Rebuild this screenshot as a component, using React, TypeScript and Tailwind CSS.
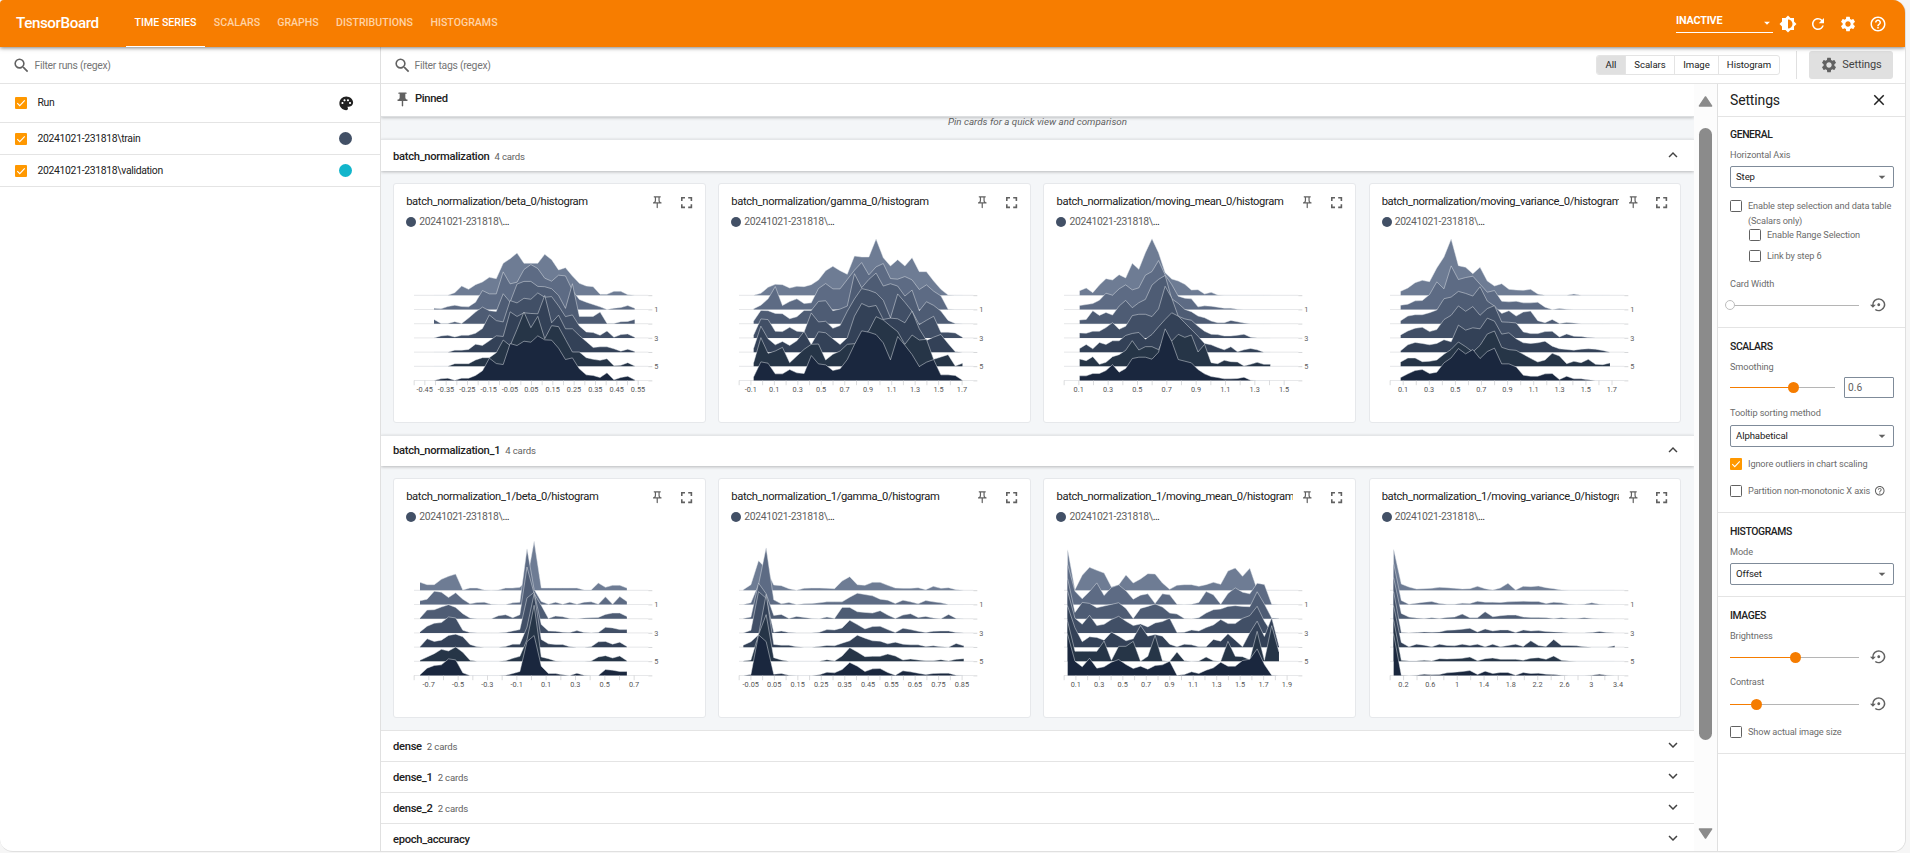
import type { ReactNode } from "react";
import {
  MdArrowDropDown,
  MdBrightness6,
  MdClose,
  MdExpandLess,
  MdExpandMore,
  MdFullscreen,
  MdHelpOutline,
  MdOutlinePushPin,
  MdPalette,
  MdPushPin,
  MdRefresh,
  MdSearch,
  MdSettings,
  MdSettingsBackupRestore,
} from "react-icons/md";

type Histogram = {
  tag: string;
  x0: number;
  dx: number;
  tick: number;
  labels: string[];
  steps: number[][];
};

const STEP_COLORS = ["#6e7c94", "#5d6b84", "#4e5c74", "#414f66", "#334157", "#263547", "#1a273e"];
const ROW = 42.6;

const GROUP_A: Histogram[] = [
  {
    tag: "batch_normalization/beta_0/histogram",
    x0: 123,
    dx: 20.76,
    tick: 32,
    labels: ["-0.45", "-0.35", "-0.25", "-0.15", "-0.05", "0.05", "0.15", "0.25", "0.35", "0.45", "0.55"],
    steps: [
      [0, 0, 0, 8, 28, 18, 32, 40, 54, 50, 96, 110, 127, 96, 96, 96, 123, 107, 76, 83, 58, 36, 28, 26, 3, 3, 12, 12, 2, 0],
      [4, 2, 9, 13, 9, 8, 22, 57, 47, 47, 113, 77, 82, 120, 135, 123, 94, 85, 103, 101, 58, 30, 22, 15, 8, 0, 4, 6, 12, 4],
      [13, 1, 1, 6, 1, 17, 35, 50, 39, 37, 90, 65, 119, 127, 127, 112, 111, 105, 85, 46, 120, 22, 22, 22, 35, 1, 1, 6, 7, 13],
      [0, 6, 8, 3, 8, 8, 14, 28, 69, 52, 48, 112, 105, 119, 116, 135, 122, 124, 96, 64, 69, 36, 18, 16, 8, 21, 2, 10, 12, 2],
      [0, 0, 0, 6, 6, 8, 24, 20, 34, 49, 47, 121, 107, 118, 116, 115, 170, 88, 111, 70, 70, 50, 32, 14, 16, 16, 10, 3, 9, 2],
      [0, 0, 0, 8, 8, 8, 19, 26, 26, 41, 79, 62, 111, 163, 116, 150, 83, 122, 119, 81, 43, 43, 26, 21, 18, 23, 2, 3, 11, 1],
      [0, 5, 7, 1, 7, 7, 15, 29, 67, 51, 48, 111, 105, 118, 115, 134, 122, 121, 97, 63, 68, 35, 17, 15, 9, 23, 2, 9, 13, 2],
    ],
  },
  {
    tag: "batch_normalization/gamma_0/histogram",
    x0: 107,
    dx: 21.6,
    tick: 35.2,
    labels: ["-0.1", "0.1", "0.3", "0.5", "0.7", "0.9", "1.1", "1.3", "1.5", "1.7"],
    steps: [
      [0, 6, 24, 33, 32, 22, 27, 26, 32, 46, 74, 87, 74, 63, 118, 115, 115, 169, 113, 88, 107, 88, 113, 71, 71, 43, 18, 1, 0, 0],
      [2, 13, 32, 69, 12, 24, 32, 18, 20, 63, 78, 62, 62, 90, 118, 141, 104, 128, 138, 93, 91, 99, 89, 60, 74, 55, 41, 1, 0, 0],
      [8, 40, 39, 31, 30, 15, 21, 40, 40, 67, 69, 39, 44, 53, 150, 108, 133, 152, 113, 120, 113, 83, 101, 39, 66, 55, 38, 10, 1, 0],
      [9, 57, 55, 20, 19, 32, 20, 18, 75, 48, 50, 29, 37, 80, 117, 148, 143, 135, 113, 60, 132, 107, 80, 40, 53, 65, 17, 17, 15, 2],
      [12, 78, 40, 22, 32, 20, 34, 62, 23, 61, 58, 40, 23, 43, 108, 146, 136, 140, 98, 102, 100, 88, 123, 70, 35, 45, 53, 26, 1, 0],
      [11, 86, 39, 46, 57, 11, 31, 51, 66, 67, 19, 36, 46, 66, 68, 86, 107, 149, 139, 121, 104, 66, 94, 79, 81, 21, 28, 35, 1, 9],
      [11, 56, 52, 20, 20, 33, 23, 21, 75, 50, 47, 30, 35, 63, 108, 149, 145, 138, 113, 62, 132, 106, 78, 42, 55, 63, 17, 17, 15, 1],
    ],
  },
  {
    tag: "batch_normalization/moving_mean_0/histogram",
    x0: 110,
    dx: 19.72,
    tick: 44,
    labels: ["0.1", "0.3", "0.5", "0.7", "0.9", "1.1", "1.3", "1.5"],
    steps: [
      [14, 22, 8, 31, 50, 46, 62, 52, 96, 78, 128, 170, 128, 68, 49, 43, 33, 16, 17, 4, 9, 1, 0, 0, 0, 0, 0, 0, 0, 0],
      [12, 15, 18, 28, 49, 43, 62, 74, 59, 65, 103, 114, 147, 104, 75, 40, 34, 32, 8, 11, 10, 7, 4, 4, 1, 0, 0, 0, 0, 0],
      [11, 13, 39, 25, 34, 26, 53, 70, 48, 63, 73, 116, 133, 145, 75, 61, 43, 36, 23, 18, 8, 3, 3, 10, 6, 2, 0, 0, 0, 0],
      [15, 14, 20, 20, 31, 46, 26, 35, 67, 71, 71, 64, 87, 155, 120, 65, 57, 53, 35, 20, 11, 10, 6, 6, 8, 11, 2, 0, 0, 0],
      [11, 23, 10, 29, 23, 34, 34, 50, 56, 59, 39, 53, 76, 98, 118, 108, 88, 68, 48, 26, 22, 14, 7, 16, 1, 7, 11, 7, 0, 0],
      [22, 17, 29, 6, 12, 29, 35, 48, 77, 49, 59, 59, 50, 91, 76, 96, 87, 94, 43, 66, 11, 8, 18, 14, 13, 1, 6, 12, 6, 6],
      [14, 14, 21, 21, 30, 48, 25, 36, 66, 70, 70, 64, 85, 155, 118, 63, 58, 53, 33, 20, 12, 9, 5, 5, 6, 10, 1, 0, 0, 0],
    ],
  },
  {
    tag: "batch_normalization/moving_variance_0/histogram",
    x0: 95,
    dx: 21.65,
    tick: 39.15,
    labels: ["0.1", "0.3", "0.5", "0.7", "0.9", "1.1", "1.3", "1.5", "1.7"],
    steps: [
      [12, 22, 38, 45, 41, 82, 115, 169, 89, 84, 65, 84, 43, 28, 35, 18, 16, 15, 18, 4, 0, 0, 0, 0, 4, 0, 0, 0, 0, 0],
      [13, 16, 26, 27, 45, 83, 62, 131, 90, 96, 100, 76, 52, 57, 25, 23, 25, 20, 20, 22, 7, 0, 3, 1, 0, 0, 0, 0, 0, 0],
      [9, 23, 27, 27, 33, 41, 75, 80, 97, 91, 83, 111, 68, 53, 31, 39, 23, 35, 38, 9, 3, 13, 1, 4, 2, 0, 0, 0, 0, 0],
      [9, 21, 29, 32, 19, 25, 55, 68, 96, 80, 94, 68, 88, 97, 48, 47, 45, 18, 13, 13, 19, 20, 3, 12, 5, 4, 1, 0, 0, 0],
      [4, 22, 29, 26, 22, 26, 37, 31, 81, 66, 73, 70, 102, 93, 54, 58, 40, 28, 26, 28, 33, 18, 10, 8, 6, 9, 10, 9, 5, 0],
      [13, 25, 25, 14, 15, 19, 36, 51, 73, 59, 43, 63, 97, 106, 57, 50, 48, 36, 24, 13, 19, 39, 31, 8, 15, 11, 21, 6, 5, 10],
      [9, 20, 30, 33, 21, 25, 53, 68, 96, 80, 93, 66, 87, 97, 50, 50, 41, 16, 13, 13, 20, 21, 3, 13, 5, 5, 2, 0, 0, 0],
    ],
  },
];

const GROUP_B: Histogram[] = [
  {
    tag: "batch_normalization_1/beta_0/histogram",
    x0: 81,
    dx: 21.4,
    tick: 44,
    labels: ["-0.7", "-0.5", "-0.3", "-0.1", "0.1", "0.3", "0.5", "0.7"],
    steps: [
      [24, 17, 17, 33, 42, 49, 1, 7, 7, 1, 0, 1, 7, 7, 9, 30, 147, 7, 7, 7, 7, 7, 7, 1, 1, 22, 9, 15, 15, 7],
      [11, 16, 40, 37, 21, 35, 16, 2, 6, 7, 1, 0, 0, 5, 7, 167, 45, 9, 1, 7, 1, 7, 1, 7, 8, 1, 23, 1, 24, 9],
      [2, 26, 27, 35, 42, 34, 15, 2, 0, 0, 0, 9, 12, 3, 12, 155, 75, 40, 1, 8, 6, 1, 0, 2, 3, 4, 13, 17, 17, 7],
      [3, 20, 29, 31, 48, 45, 8, 1, 0, 0, 0, 0, 1, 6, 10, 105, 122, 25, 6, 5, 2, 1, 7, 1, 0, 1, 17, 15, 10, 10],
      [1, 25, 17, 21, 35, 39, 31, 8, 1, 0, 0, 0, 2, 9, 9, 60, 160, 23, 10, 8, 8, 1, 0, 0, 1, 16, 17, 9, 15, 2],
      [3, 13, 23, 36, 31, 43, 27, 3, 0, 0, 0, 0, 2, 9, 15, 65, 168, 13, 8, 1, 0, 0, 0, 0, 1, 13, 17, 10, 16, 2],
      [2, 22, 30, 32, 50, 47, 8, 0, 0, 0, 0, 0, 1, 6, 12, 102, 120, 28, 6, 6, 2, 0, 7, 1, 0, 0, 18, 16, 12, 12],
    ],
  },
  {
    tag: "batch_normalization_1/gamma_0/histogram",
    x0: 76,
    dx: 22.8,
    tick: 35.2,
    labels: ["-0.05", "0.05", "0.15", "0.25", "0.35", "0.45", "0.55", "0.65", "0.75", "0.85"],
    steps: [
      [2, 17, 89, 65, 16, 14, 5, 0, 6, 7, 7, 6, 5, 28, 41, 17, 15, 24, 24, 15, 7, 6, 6, 8, 2, 12, 6, 8, 2, 0],
      [0, 5, 60, 170, 14, 2, 6, 0, 2, 3, 5, 8, 8, 8, 22, 34, 30, 26, 16, 13, 3, 13, 8, 2, 12, 8, 5, 0, 0, 0],
      [1, 5, 107, 75, 10, 13, 1, 7, 4, 1, 0, 5, 1, 34, 34, 21, 19, 17, 24, 11, 1, 11, 15, 4, 7, 2, 0, 13, 1, 0],
      [0, 8, 124, 104, 2, 6, 1, 0, 0, 0, 2, 10, 9, 15, 38, 25, 12, 19, 20, 10, 1, 14, 10, 5, 1, 5, 6, 6, 1, 0],
      [6, 16, 37, 158, 8, 6, 6, 1, 0, 0, 2, 5, 4, 12, 19, 36, 27, 19, 18, 10, 15, 9, 7, 7, 2, 4, 1, 0, 11, 4],
      [1, 4, 80, 140, 11, 4, 0, 0, 0, 0, 0, 5, 1, 16, 41, 28, 14, 15, 15, 22, 16, 4, 7, 4, 2, 2, 5, 1, 6, 8],
      [0, 3, 122, 102, 4, 6, 1, 0, 0, 0, 2, 10, 8, 18, 39, 28, 12, 20, 21, 9, 1, 14, 11, 7, 3, 6, 7, 7, 1, 0],
    ],
  },
  {
    tag: "batch_normalization_1/moving_mean_0/histogram",
    x0: 74,
    dx: 21.86,
    tick: 35.2,
    labels: ["0.1", "0.3", "0.5", "0.7", "0.9", "1.1", "1.3", "1.5", "1.7", "1.9"],
    steps: [
      [122, 2, 45, 69, 60, 52, 10, 16, 46, 22, 34, 50, 49, 22, 3, 15, 17, 17, 12, 17, 24, 18, 58, 67, 42, 66, 2, 0, 0, 0],
      [120, 40, 17, 39, 65, 27, 51, 59, 41, 16, 28, 32, 3, 32, 29, 1, 0, 1, 6, 39, 29, 1, 33, 50, 37, 32, 64, 60, 1, 0],
      [120, 19, 49, 46, 33, 38, 43, 48, 31, 1, 31, 37, 44, 35, 17, 14, 1, 0, 3, 17, 27, 29, 37, 39, 37, 36, 81, 44, 2, 1],
      [125, 44, 26, 53, 22, 26, 40, 50, 35, 22, 27, 18, 30, 34, 44, 1, 2, 9, 6, 16, 24, 40, 28, 28, 44, 52, 80, 35, 1, 0],
      [123, 58, 16, 31, 29, 21, 45, 33, 19, 25, 65, 33, 38, 33, 9, 1, 9, 7, 1, 1, 23, 18, 40, 21, 1, 43, 78, 32, 88, 3],
      [120, 30, 30, 30, 30, 61, 3, 45, 45, 60, 0, 15, 78, 2, 0, 28, 2, 0, 1, 13, 2, 0, 60, 15, 14, 5, 90, 3, 107, 28],
      [123, 43, 26, 52, 22, 26, 40, 48, 33, 21, 28, 19, 30, 32, 43, 1, 3, 11, 6, 16, 23, 40, 28, 28, 45, 49, 80, 33, 1, 0],
    ],
  },
  {
    tag: "batch_normalization_1/moving_variance_0/histogram",
    x0: 74,
    dx: 22.86,
    tick: 40.25,
    labels: ["0.2", "0.6", "1", "1.4", "1.8", "2.2", "2.6", "3", "3.4"],
    steps: [
      [123, 19, 10, 4, 5, 6, 9, 8, 6, 4, 5, 12, 5, 1, 7, 21, 1, 12, 11, 13, 8, 5, 1, 0, 0, 0, 0, 0, 0, 0],
      [123, 12, 1, 4, 7, 9, 3, 1, 1, 4, 3, 10, 7, 7, 6, 8, 9, 10, 9, 9, 3, 7, 5, 1, 0, 1, 5, 1, 0, 0],
      [123, 16, 5, 2, 1, 3, 1, 4, 5, 14, 3, 3, 21, 6, 9, 11, 11, 5, 4, 4, 3, 1, 3, 1, 1, 3, 1, 0, 0, 0],
      [123, 1, 0, 1, 3, 2, 3, 8, 9, 11, 14, 3, 12, 6, 9, 9, 1, 9, 6, 7, 4, 3, 2, 0, 0, 0, 1, 4, 1, 0],
      [123, 14, 1, 9, 6, 1, 9, 5, 4, 9, 5, 9, 1, 9, 1, 5, 9, 2, 19, 5, 2, 23, 5, 5, 4, 1, 0, 0, 0, 4],
      [123, 3, 1, 1, 3, 1, 8, 7, 8, 9, 13, 2, 8, 10, 6, 6, 6, 3, 9, 11, 6, 16, 3, 1, 0, 0, 0, 0, 0, 0],
      [123, 1, 0, 1, 4, 2, 3, 8, 10, 12, 15, 3, 13, 6, 9, 9, 1, 9, 6, 7, 4, 3, 1, 0, 0, 0, 1, 4, 1, 0],
    ],
  },
];

// Offset-mode histogram: each step is a filled ridge on its own baseline, three units per pixel.
function OffsetHistogram({ data }: { data: Histogram }) {
  const bottom = 187 + ROW * 6;
  const tickCount = Math.floor(702 / data.tick) + 1;
  return (
    <svg className="block h-[190px] w-[312px] shrink-0" viewBox="0 0 936 570">
      {data.steps.map((heights, i) => {
        const base = 187 + ROW * i;
        const pts = heights.map((h, k) => `${(data.x0 + k * data.dx).toFixed(1)},${(base - h).toFixed(1)}`);
        const lastX = data.x0 + (heights.length - 1) * data.dx;
        return (
          <g key={i}>
            <line x1="63" x2="766" y1={base} y2={base} stroke="#d9dbde" strokeWidth="2" />
            <line x1="766" x2="778" y1={base + 1} y2={base + 1} stroke="#bfc1c4" strokeWidth="2" />
            <path
              d={`M${data.x0},${base} L${pts.join(" L")} L${lastX},${base} Z`}
              fill={STEP_COLORS[i]}
            />
            <polyline points={pts.join(" ")} fill="none" stroke="#e4e7ec" strokeOpacity="0.6" strokeWidth="2.4" />
            {i % 2 === 1 && (
              <text x="784" y={base + 8} fontSize="22" fill="#616161">
                {i}
              </text>
            )}
          </g>
        );
      })}
      {Array.from({ length: tickCount }, (_, k) => (
        <line
          key={k}
          x1={63.5 + k * data.tick}
          x2={63.5 + k * data.tick}
          y1={bottom}
          y2={bottom + 14}
          stroke="#c8cacd"
          strokeWidth="2"
        />
      ))}
      {data.labels.map((label, k) => (
        <text
          key={label}
          x={63 + data.tick * (2 * k + 1)}
          y={bottom + 35}
          fontSize="22"
          fill="#555"
          textAnchor="middle"
        >
          {label}
        </text>
      ))}
    </svg>
  );
}

function HistogramCard({ data }: { data: Histogram }) {
  return (
    <div className="flex h-[240px] min-w-0 flex-col overflow-hidden rounded-[3px] border border-[#e6e8eb] bg-white">
      <div className="flex h-[22px] shrink-0 items-center pt-[15px] pl-[12px]">
        <div className="w-[237px] overflow-hidden text-[11.2px] tracking-[-0.35px] whitespace-nowrap text-[#212121]">
          {data.tag}
        </div>
        <MdOutlinePushPin className="ml-[7px] size-[14.5px] shrink-0 text-[#616161]" />
        <MdFullscreen className="ml-[12px] size-[19.2px] shrink-0 text-[#616161]" />
      </div>
      <div className="mt-[10px] flex h-[12px] shrink-0 items-center pl-[12px]">
        <span className="size-[10px] rounded-full bg-[#425066]" />
        <span className="ml-[3px] text-[10.4px] tracking-[-0.35px] text-[#616161]">
          20241021-231818\<span className="text-[#212121]">…</span>
        </span>
      </div>
      <div className="-mx-px mt-[5px]">
        <OffsetHistogram data={data} />
      </div>
    </div>
  );
}

function Group({ name, count, cards, tall }: { name: string; count: string; cards: Histogram[]; tall?: boolean }) {
  return (
    <section>
      <div
        className={`${tall ? "h-[32px] pt-[3px]" : "h-[31px] pt-[1px]"} relative flex items-center justify-between border-t border-[#e4e6e8] bg-white pr-[12px] pl-[12px] shadow-[0_1px_3px_rgba(0,0,0,0.25)]`}
      >
        <GroupTitle name={name} count={count} />
        <MdExpandLess className="mb-[4px] size-[18px] text-[#424242]" />
      </div>
      <div className="grid grid-cols-4 gap-[12.8px] py-[12px] pr-[13px] pl-[12.2px]">
        {cards.map((c) => (
          <HistogramCard key={c.tag} data={c} />
        ))}
      </div>
    </section>
  );
}

function GroupTitle({ name, count }: { name: string; count: string }) {
  return (
    <div className="flex items-baseline gap-[5px]">
      <span className="text-[11.2px] font-medium tracking-[-0.29px] text-[#212121]">{name}</span>
      <span className="text-[9.6px] tracking-[-0.15px] text-[#616161]">{count}</span>
    </div>
  );
}

function CheckBox({ checked }: { checked?: boolean }) {
  if (!checked) {
    return <span className="size-[12px] shrink-0 rounded-[1.5px] border-[1.4px] border-[#616161]" />;
  }
  return (
    <span className="flex size-[12px] shrink-0 items-center justify-center rounded-[1px] bg-[#ff9800]">
      <svg className="size-[10px]" viewBox="0 0 24 24" fill="none" stroke="#fff" strokeWidth="2.6">
        <path d="M3 12.5 L9 18.5 L21 5.5" />
      </svg>
    </span>
  );
}

function Select({ value }: { value: string }) {
  return (
    <div className="mt-[3px] flex h-[22px] w-[164px] items-center justify-between rounded-[2px] border border-[#7f8b99] pr-[3px] pl-[5px]">
      <span className="text-[9.6px] tracking-[-0.1px] text-[#212121]">{value}</span>
      <MdArrowDropDown className="size-[16px] text-[#616161]" />
    </div>
  );
}

function Heading({ children }: { children: ReactNode }) {
  return (
    <div className="h-[16px] text-[10.4px] leading-[16px] font-medium tracking-[-0.4px] text-[#212121]">{children}</div>
  );
}

function FieldLabel({ children, className }: { children: ReactNode; className: string }) {
  return (
    <div className={`${className} h-[16px] text-[9.2px] leading-[16px] tracking-[-0.1px] text-[#6c6c6c]`}>{children}</div>
  );
}

function Slider({ width, at, hollow }: { width: string; at: number; hollow?: boolean }) {
  return (
    <div className={`${width} relative flex h-[11px] shrink-0 items-center`}>
      <span className="h-px bg-[#f57c00]" style={{ width: at }} />
      <span className="h-px flex-1 bg-[#b5b5b5]" />
      <span
        className={`absolute rounded-full ${hollow ? "size-[10.5px] border-[1.5px] border-[#bdbdbd] bg-white" : "size-[11px] bg-[#f57c00]"}`}
        style={{ left: at - 5.3 }}
      />
    </div>
  );
}

function Check({ label, checked, className }: { label: ReactNode; checked?: boolean; className: string }) {
  return (
    <div className={`${className} flex h-[12px] items-center gap-[6px] text-[9.2px] tracking-[-0.12px] text-[#6c6c6c]`}>
      <CheckBox checked={checked} />
      <span className="whitespace-nowrap">{label}</span>
    </div>
  );
}

function SettingsPanel() {
  return (
    <aside className="flex w-[188px] shrink-0 flex-col border-l border-[#e0e0e0] bg-white">
      <div className="flex h-[33px] items-center justify-between border-b border-[#e4e4e4] pr-[17px] pl-[12px]">
        <span className="text-[14px] tracking-[-0.15px] text-[#212121]">Settings</span>
        <MdClose className="size-[18px] text-[#212121]" />
      </div>
      <section className="border-b border-[#e4e4e4] pt-[10px] pb-[12px] pl-[12px]">
        <Heading>GENERAL</Heading>
        <FieldLabel className="mt-[4px]">Horizontal Axis</FieldLabel>
        <Select value="Step" />
        <div className="mt-[10px] flex gap-[6px] text-[9.2px] leading-[15px] tracking-[-0.12px] whitespace-nowrap text-[#6c6c6c]">
          <span className="flex pt-[2px]">
            <CheckBox />
          </span>
          <span>
            Enable step selection and data table
            <br />
            (Scalars only)
          </span>
        </div>
        <Check className="mt-[1px] ml-[19px]" label="Enable Range Selection" />
        <Check className="mt-[9px] ml-[19px]" label="Link by step 6" />
        <FieldLabel className="mt-[14px]">Card Width</FieldLabel>
        <div className="mt-[3px] flex h-[20px] items-center">
          <Slider width="w-[129px]" at={0} hollow />
          <MdSettingsBackupRestore className="ml-[11px] size-[17.5px] text-[#616161]" />
        </div>
      </section>
      <section className="border-b border-[#e4e4e4] pt-[11px] pb-[15px] pl-[12px]">
        <Heading>SCALARS</Heading>
        <FieldLabel className="mt-[4px]">Smoothing</FieldLabel>
        <div className="mt-[2px] flex h-[21px] items-center">
          <Slider width="w-[105px]" at={63} />
          <div className="ml-[9px] flex h-[21px] w-[50px] items-center rounded-[1px] border border-[#7f8b99] pl-[3px] text-[10.2px] text-[#616161]">
            0.6
          </div>
        </div>
        <FieldLabel className="mt-[7px]">Tooltip sorting method</FieldLabel>
        <div className="pt-[1px]">
          <Select value="Alphabetical" />
        </div>
        <Check className="mt-[11px]" label="Ignore outliers in chart scaling" checked />
        <div className="mt-[15px] flex h-[12px] items-center">
          <Check className="" label="Partition non-monotonic X axis" />
          <MdHelpOutline className="ml-[4px] size-[11.5px] text-[#616161]" />
        </div>
      </section>
      <section className="border-b border-[#e4e4e4] pt-[11px] pb-[11px] pl-[12px]">
        <Heading>HISTOGRAMS</Heading>
        <FieldLabel className="mt-[4px]">Mode</FieldLabel>
        <Select value="Offset" />
      </section>
      <section className="border-b border-[#e4e4e4] pt-[11px] pb-[15px] pl-[12px]">
        <Heading>IMAGES</Heading>
        <FieldLabel className="mt-[4px]">Brightness</FieldLabel>
        <div className="mt-[3px] flex h-[20px] items-center">
          <Slider width="w-[129px]" at={65} />
          <MdSettingsBackupRestore className="ml-[11px] size-[17.5px] text-[#616161]" />
        </div>
        <FieldLabel className="mt-[7px]">Contrast</FieldLabel>
        <div className="mt-[4px] flex h-[20px] items-center">
          <Slider width="w-[129px]" at={26} />
          <MdSettingsBackupRestore className="ml-[11px] size-[17.5px] text-[#616161]" />
        </div>
        <Check className="mt-[12px]" label="Show actual image size" />
      </section>
    </aside>
  );
}

function ScrollBar() {
  return (
    <div className="flex w-[23px] shrink-0 flex-col items-center bg-[#fcfcfc] pt-[12px]">
      <svg className="h-[11px] w-[15px]" viewBox="0 0 15 11">
        <path d="M7.5 1 L13.5 10 H1.5 Z" fill="#8b8b8b" stroke="#8b8b8b" strokeWidth="1.6" strokeLinejoin="round" />
      </svg>
      <div className="mt-[21px] h-[612px] w-[13px] rounded-full bg-[#8b8b8b]" />
      <svg className="mt-[88px] h-[11px] w-[15px]" viewBox="0 0 15 11">
        <path d="M7.5 10 L13.5 1 H1.5 Z" fill="#8b8b8b" stroke="#8b8b8b" strokeWidth="1.6" strokeLinejoin="round" />
      </svg>
    </div>
  );
}

function RunRow({ name, color, className }: { name: string; color?: string; className: string }) {
  return (
    <div className={`${className} flex items-center border-b border-[#e4e4e4] pl-[15px]`}>
      <CheckBox checked />
      <span className="ml-[10.5px] flex-1 text-[10.4px] tracking-[-0.32px] text-[#212121]">{name}</span>
      {color ? (
        <span className={`mr-[28px] size-[13.5px] rounded-full ${color}`} />
      ) : (
        <MdPalette className="mr-[26px] size-[16.5px] text-[#212121]" />
      )}
    </div>
  );
}

const TABS: { name: string; box: string; style: string }[] = [
  { name: "TIME SERIES", box: "w-[79px]", style: "border-white text-white" },
  { name: "SCALARS", box: "w-[64px]", style: "border-transparent text-[#ffd3a6]" },
  { name: "GRAPHS", box: "w-[58px]", style: "border-transparent text-[#ffd3a6]" },
  { name: "DISTRIBUTIONS", box: "w-[95px]", style: "border-transparent text-[#ffd3a6]" },
  { name: "HISTOGRAMS", box: "w-[84px]", style: "border-transparent text-[#ffd3a6]" },
];

export default function App() {
  return (
    <div className="h-[853px] w-[1910px] overflow-hidden bg-[#f6f6f6] font-[Roboto,sans-serif]">
      <div className="flex h-[852px] w-[1906px] flex-col overflow-hidden rounded-[13px] rounded-tl-[4px] border-r border-b border-[#e0e0e0] bg-white">
        <header className="relative z-10 flex h-[47px] shrink-0 bg-[#f77d00] shadow-[0_1px_4px_rgba(0,0,0,0.5)]">
          <div className="flex w-[126px] items-center pl-[16px] text-[15.2px] font-medium tracking-[-0.4px] text-white">
            TensorBoard
          </div>
          <nav className="flex flex-1">
            {TABS.map((t) => (
              <div
                key={t.name}
                className={`${t.box} ${t.style} flex items-center justify-center border-b pt-[1px] pb-[2px] text-[10.6px] font-medium whitespace-nowrap`}
              >
                {t.name}
              </div>
            ))}
          </nav>
          <div className="flex items-center pr-[18px] text-white">
            <div className="mb-[5px] flex h-[24px] w-[97px] items-center justify-between border-b border-white">
              <span className="pt-[2px] text-[10.8px] font-bold tracking-[-0.2px]">INACTIVE</span>
              <MdArrowDropDown className="mt-[4px] -mr-[1px] size-[14px]" />
            </div>
            <MdBrightness6 className="ml-[6px] size-[18px]" />
            <MdRefresh className="ml-[12px] size-[18px]" />
            <MdSettings className="ml-[12px] size-[18px]" />
            <MdHelpOutline className="ml-[12px] size-[18px]" />
          </div>
        </header>
        <div className="flex min-h-0 flex-1">
          <aside className="w-[381px] shrink-0 border-r border-[#e0e0e0]">
            <div className="flex h-[37px] items-center border-b border-[#e4e4e4] pl-[12px]">
              <MdSearch className="size-[19px] text-[#616161]" />
              <span className="ml-[3.5px] pt-[1px] text-[10.4px] tracking-[-0.27px] text-[#757575]">
                Filter runs (regex)
              </span>
            </div>
            <RunRow className="h-[39px]" name="Run" />
            <RunRow className="h-[32px]" name="20241021-231818\train" color="bg-[#425066]" />
            <RunRow className="h-[32px]" name="20241021-231818\validation" color="bg-[#12b5cb]" />
          </aside>
          <div className="flex min-w-0 flex-1 flex-col">
            <div className="flex h-[37px] shrink-0 items-center border-b border-[#e4e4e4] pr-[12px] pl-[12px]">
              <MdSearch className="size-[19px] text-[#616161]" />
              <span className="ml-[2.5px] flex-1 pt-[1px] text-[10.4px] tracking-[-0.27px] text-[#757575]">
                Filter tags (regex)
              </span>
              <div className="flex h-[20px] items-stretch divide-x divide-[#e4e4e4] overflow-hidden rounded-[3px] border border-[#e4e4e4] text-[9.6px] tracking-[-0.05px] text-[#212121]">
                <span className="flex w-[29px] items-center justify-center bg-[#e0e0e0]">All</span>
                <span className="flex w-[49px] items-center justify-center">Scalars</span>
                <span className="flex w-[44px] items-center justify-center">Image</span>
                <span className="flex w-[60px] items-center justify-center">Histogram</span>
              </div>
              <div className="ml-[16px] h-[28px] w-px bg-[#e0e0e0]" />
              <div className="ml-[12px] flex h-[28px] w-[84px] items-center justify-center gap-[4px] rounded-[3px] bg-[#e0e0e0] text-[11px] tracking-[-0.1px] text-[#424242]">
                <MdSettings className="size-[18px] text-[#616161]" />
                Settings
              </div>
            </div>
            <div className="flex min-h-0 flex-1">
              <main className="flex min-w-0 flex-1 flex-col overflow-hidden bg-[#f4f6f8]">
                <div className="relative flex h-[33px] shrink-0 items-center border-b border-[#dcdee0] bg-white pb-[2px] pl-[13px] shadow-[0_1px_3px_rgba(0,0,0,0.22)]">
                  <MdPushPin className="size-[17px] text-[#616161]" />
                  <span className="ml-[4px] pt-[1px] text-[11.2px] font-medium tracking-[-0.35px] text-[#212121]">
                    Pinned
                  </span>
                </div>
                <div className="flex h-[22px] shrink-0 items-start justify-center text-[9.8px] leading-[9px] text-[#616161] italic">
                  Pin cards for a quick view and comparison
                </div>
                <Group name="batch_normalization" count="4 cards" cards={GROUP_A} tall />
                <Group name="batch_normalization_1" count="4 cards" cards={GROUP_B} />
                {[
                  ["dense", "2 cards"],
                  ["dense_1", "2 cards"],
                  ["dense_2", "2 cards"],
                  ["epoch_accuracy", ""],
                ].map(([name, count]) => (
                  <div
                    key={name}
                    className="flex h-[31px] shrink-0 items-center justify-between border-t border-[#e4e4e4] bg-white px-[12px] pt-[2px]"
                  >
                    <GroupTitle name={name} count={count} />
                    <MdExpandMore className="mb-[4px] size-[18px] text-[#424242]" />
                  </div>
                ))}
              </main>
              <ScrollBar />
              <SettingsPanel />
            </div>
          </div>
        </div>
      </div>
    </div>
  );
}
